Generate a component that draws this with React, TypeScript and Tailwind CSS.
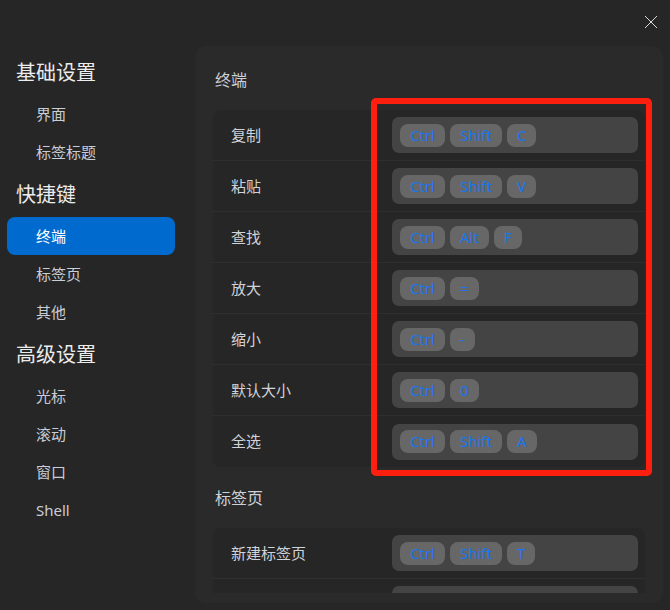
import React from "react";

type Shortcut = { label: string; keys: string[] };

const nav: { title: string; items: string[] }[] = [
  { title: "基础设置", items: ["界面", "标签标题"] },
  { title: "快捷键", items: ["终端", "标签页", "其他"] },
  { title: "高级设置", items: ["光标", "滚动", "窗口", "Shell"] },
];

const sections: { title: string; rows: Shortcut[] }[] = [
  {
    title: "终端",
    rows: [
      { label: "复制", keys: ["Ctrl", "Shift", "C"] },
      { label: "粘贴", keys: ["Ctrl", "Shift", "V"] },
      { label: "查找", keys: ["Ctrl", "Alt", "F"] },
      { label: "放大", keys: ["Ctrl", "="] },
      { label: "缩小", keys: ["Ctrl", "-"] },
      { label: "默认大小", keys: ["Ctrl", "0"] },
      { label: "全选", keys: ["Ctrl", "Shift", "A"] },
    ],
  },
  {
    title: "标签页",
    rows: [
      { label: "新建标签页", keys: ["Ctrl", "Shift", "T"] },
      { label: "关闭标签页", keys: ["Ctrl", "W"] },
      { label: "下一个标签页", keys: ["Ctrl", "Tab"] },
    ],
  },
];

const font = { fontFamily: '"Noto Sans", "Noto Sans CJK SC", sans-serif' };

function Sidebar() {
  return (
    <aside className="w-[195px] shrink-0 pl-[7px] pt-[49px]">
      {nav.map((group) => (
        <div key={group.title}>
          <div className="pl-[9px] pt-[10px] pb-[8px] text-[20px] leading-[28px] text-[#ececec]">
            {group.title}
          </div>
          {group.items.map((item) => {
            const active = item === "终端";
            return (
              <div
                key={item}
                className={
                  active
                    ? "flex h-[38px] w-[168px] items-center rounded-[8px] bg-[#006acf] pl-[29px] text-[15px] text-white"
                    : "flex h-[38px] w-[168px] items-center pl-[29px] text-[15px] text-[#c9cdd5]"
                }
              >
                {item}
              </div>
            );
          })}
        </div>
      ))}
    </aside>
  );
}

function Keys({ keys }: { keys: string[] }) {
  return (
    <div className="mr-[7px] flex h-[36px] flex-1 items-center gap-[5px] rounded-[7px] bg-[#444444] px-[8px]">
      {keys.map((k) => (
        <span
          key={k}
          className="flex h-[23px] items-center rounded-[8px] bg-[#676767] px-[10px] text-[15px] leading-none text-[#1876f2]"
        >
          {k}
        </span>
      ))}
    </div>
  );
}

function Section({ title, rows }: { title: string; rows: Shortcut[] }) {
  return (
    <section>
      <h2 className="mb-[18px] pl-[2px] text-[16px] leading-[24px] text-[#cdd1d9]">{title}</h2>
      <div className="rounded-[8px] bg-[#262626]">
        {rows.map((row, i) => (
          <div
            key={row.label}
            className={
              i < rows.length - 1
                ? "flex h-[51px] items-center border-b border-[#2f2f2f]"
                : "flex h-[51px] items-center"
            }
          >
            <div className="w-[179px] shrink-0 pl-[18px] text-[15px] text-[#d0d3da]">{row.label}</div>
            <Keys keys={row.keys} />
          </div>
        ))}
      </div>
    </section>
  );
}

export default function App() {
  return (
    <div className="relative flex h-[610px] w-[670px] overflow-hidden bg-[#262626]" style={font}>
      <Sidebar />

      <main className="mb-[7px] mr-[7px] mt-[46px] flex flex-1 flex-col rounded-[10px] bg-[#2a2a2a] pb-[10px]">
        <div className="flex flex-1 flex-col gap-[19px] overflow-hidden px-[18px] pt-[22px]">
          {sections.map((s) => (
            <Section key={s.title} title={s.title} rows={s.rows} />
          ))}
        </div>
      </main>

      <button className="absolute left-[644px] top-[15px] flex h-[14px] w-[14px] items-center justify-center">
        <svg width="14" height="14" viewBox="0 0 14 14" fill="none">
          <path d="M1 1L13 13M13 1L1 13" stroke="#dcdcdc" strokeWidth="1" />
        </svg>
      </button>

      <div className="pointer-events-none absolute left-[371px] top-[98px] h-[378px] w-[281px] rounded-[5px] border-[6px] border-[#ff1f0f]" />
    </div>
  );
}
